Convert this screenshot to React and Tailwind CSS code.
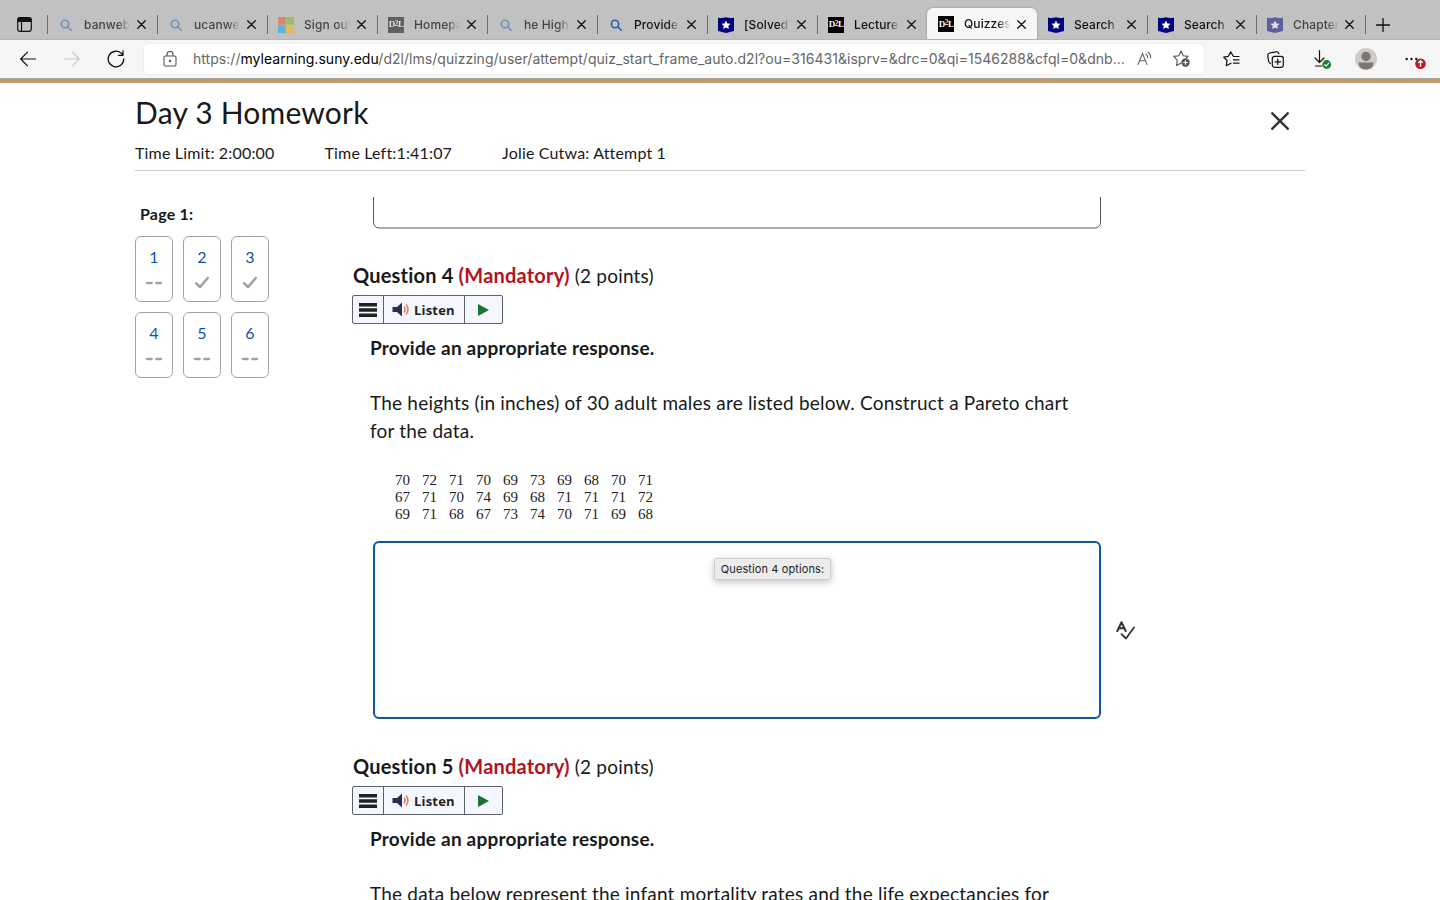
function SearchIcon() {
  return (
    <svg className="h-4 w-4" viewBox="0 0 16 16" fill="none" stroke="#1f5fb8" strokeWidth="1.6">
      <circle cx="7" cy="7" r="3.7" />
      <path strokeLinecap="round" d="M9.8 9.8l3.4 3.4" />
    </svg>
  );
}

function MicrosoftIcon() {
  return (
    <svg className="h-4 w-4" viewBox="0 0 16 16">
      <path fill="#f25022" d="M0 0h7.7v7.7H0z" />
      <path fill="#7fba00" d="M8.3 0H16v7.7H8.3z" />
      <path fill="#00a4ef" d="M0 8.3h7.7V16H0z" />
      <path fill="#ffb900" d="M8.3 8.3H16V16H8.3z" />
    </svg>
  );
}

function D2LIcon() {
  return (
    <span className="flex h-4 w-4 items-center justify-center bg-black font-['Liberation_Serif',serif] text-[9px] font-bold leading-none tracking-[-0.6px] text-white">
      D<span className="pb-[2px] text-[8px] text-[#f0d8c8]">2</span>L
    </span>
  );
}

function BadgeIcon() {
  return (
    <svg className="h-4 w-4" viewBox="0 0 16 16">
      <path fill="#00007f" d="M0 0.5Q4 1.8 8 0.3Q12 1.8 16 0.5V14L8 16L0 14Z" />
      <path fill="#fff" d="M8 3.4l1.4 3 3.2.3-2.4 2.2.7 3.2L8 10.5l-2.9 1.6.7-3.2-2.4-2.2 3.2-.3z" />
    </svg>
  );
}

function CloseIcon() {
  return (
    <svg className="h-[9px] w-[9px] shrink-0" viewBox="0 0 9 9" fill="none" stroke="#111" strokeWidth="1.3">
      <path strokeLinecap="round" d="M0.7 0.7l7.6 7.6M8.3 0.7L0.7 8.3" />
    </svg>
  );
}

const tabs = [
  { label: 'banweb', icon: SearchIcon, dim: true },
  { label: 'ucanwe', icon: SearchIcon, dim: true },
  { label: 'Sign out', icon: MicrosoftIcon, dim: true },
  { label: 'Homepa', icon: D2LIcon, dim: true },
  { label: 'he High', icon: SearchIcon, dim: true },
  { label: 'Provide', icon: SearchIcon },
  { label: '[Solved]', icon: BadgeIcon },
  { label: 'Lecture', icon: D2LIcon },
  { label: 'Quizzes', icon: D2LIcon, active: true },
  { label: 'Search', icon: BadgeIcon },
  { label: 'Search', icon: BadgeIcon, narrow: true },
  { label: 'Chapter', icon: BadgeIcon, dim: true, narrow: true },
];

function Tab({ label, icon: Icon, dim, active, narrow, separator }) {
  return (
    <div
      className={`flex shrink-0 items-center pl-[10px] ${narrow ? 'w-[109px]' : 'w-[110px]'} ${
        active ? 'mt-2 h-8 rounded-t-md bg-[#f6f6f6] shadow-[0_0_2px_rgba(0,0,0,0.35)]' : 'mt-[15px] h-[19px]'
      } ${separator ? 'border-l border-[#6e6e6e]' : 'border-l border-transparent'}`}
    >
      <span className={dim ? 'shrink-0 opacity-50' : 'shrink-0'}>
        <Icon />
      </span>
      <span
        className={`ml-[10px] w-[47px] shrink-0 whitespace-nowrap text-[12px] font-medium leading-[18px] tracking-[0.1px] [mask-image:linear-gradient(to_right,#000_72%,transparent_98%)] ${
          dim ? 'text-[#444]' : 'text-[#111]'
        }`}
      >
        {label}
      </span>
      <span className={narrow ? 'ml-[5px]' : 'ml-[6px]'}>
        <CloseIcon />
      </span>
    </div>
  );
}

function TabBar() {
  return (
    <div className="flex h-10 overflow-hidden border-b border-[#b4b4b4] bg-[#c1c1c1]">
      <div className="w-[47px] shrink-0 pl-[17px] pt-[17px]">
        <svg className="h-[15px] w-[15px]" viewBox="0 0 15 15" fill="none" stroke="#111" strokeWidth="1.2">
          <rect x="0.7" y="0.7" width="13.6" height="13.6" rx="2.2" />
          <path fill="#111" d="M1 3q0-2 2-2h9q2 0 2 2v1.5H1z" />
          <path d="M4.5 4.5v10" />
        </svg>
      </div>
      {tabs.map((tab, i) => (
        <Tab key={i} {...tab} separator={i !== 8 && i !== 9} />
      ))}
      <div className="mt-[15px] flex h-[19px] items-center border-l border-[#6e6e6e] pl-[10px]">
        <svg className="h-[14px] w-[14px]" viewBox="0 0 14 14" stroke="#111" strokeWidth="1.3">
          <path strokeLinecap="round" d="M7 0.5v13M0.5 7h13" />
        </svg>
      </div>
    </div>
  );
}

function AddressBar() {
  return (
    <div className="flex h-[38px] items-center bg-[#f6f6f6]">
      <svg className="ml-5 h-4 w-4" viewBox="0 0 16 16" fill="none" stroke="#111" strokeWidth="1.2" strokeLinecap="round" strokeLinejoin="round">
        <path d="M16 8H0.7M7.5 1.2L0.7 8l6.8 6.8" />
      </svg>
      <svg className="ml-7 h-4 w-4" viewBox="0 0 16 16" fill="none" stroke="#c8c8c8" strokeWidth="1.2" strokeLinecap="round" strokeLinejoin="round">
        <path d="M0 8h15.3M8.5 1.2L15.3 8l-6.8 6.8" />
      </svg>
      <svg className="ml-[27px] h-[18px] w-[18px]" viewBox="0 0 18 18" fill="none" stroke="#111" strokeWidth="1.3" strokeLinecap="round" strokeLinejoin="round">
        <path d="M16.8 9A7.8 7.8 0 1 1 14.8 3.8L16 5.2M16 1v4.3h-4.5" />
      </svg>
      <div className="ml-[19px] flex h-[30px] w-[1060px] shrink-0 items-center rounded bg-white shadow-[0_0_2px_rgba(0,0,0,0.12)]">
        <svg className="ml-[19px] h-4 w-[14px]" viewBox="0 0 14 16" fill="none" stroke="#555" strokeWidth="1.1">
          <rect x="1" y="5" width="12" height="10" rx="1.5" />
          <path d="M4 5V3.5a3 3 0 0 1 6 0V5" />
          <circle cx="7" cy="10" r="0.7" fill="#333" />
        </svg>
        <span className="-mt-px ml-4 w-[934px] shrink-0 whitespace-nowrap text-[14px] tracking-[0.035px] text-[#666]">
          https://<span className="text-black">mylearning.suny.edu</span>
          /d2l/lms/quizzing/user/attempt/quiz_start_frame_auto.d2l?ou=316431&amp;isprv=&amp;drc=0&amp;qi=1546288&amp;cfql=0&amp;dnb...
        </span>
        <svg className="ml-[10px] h-4 w-4 shrink-0" viewBox="0 0 16 16" fill="none" stroke="#666" strokeWidth="1.1" strokeLinecap="round">
          <path d="M1 13.5L5.5 2.5L10 13.5M2.6 9.8h5.8M9 3q1.7 1.200 1.700 3.500M11.300 1.200q2.500 2 2.300 5.800" />
        </svg>
        <svg className="ml-5 h-[18px] w-[18px] shrink-0" viewBox="0 0 18 18" fill="none" stroke="#555" strokeWidth="1.1" strokeLinejoin="round">
          <path d="M13 8.3L15 6.4L10.2 5.7L8 1L5.8 5.7L0.7 6.4L4.3 10.3L3.5 15.5L8 13" />
          <circle cx="12.5" cy="12.5" r="4.2" fill="#555" stroke="none" />
          <path stroke="#fff" d="M12.5 10.3v4.4M10.3 12.5h4.4" />
        </svg>
      </div>
      <svg className="ml-[19px] h-4 w-[17px] shrink-0" viewBox="0 0 17 16" fill="none" stroke="#111" strokeWidth="1.2" strokeLinecap="round" strokeLinejoin="round">
        <path d="M16 5.5h-5.5L7.7 0.9L5.3 5.3L0.7 6.2L4 9.5L3.3 14.7L8 12.2M10.5 8.8H16M10.5 12.2H16" />
      </svg>
      <svg className="ml-[27px] h-[17px] w-[17px] shrink-0" viewBox="0 0 17 17" fill="none" stroke="#111" strokeWidth="1.2" strokeLinecap="round" strokeLinejoin="round">
        <rect x="5.3" y="5.3" width="11" height="11" rx="2.2" />
        <path d="M10.8 8v5.6M8 10.8h5.6M3.5 12.5Q2 12 1.6 10.2L0.8 4.8Q0.6 2.5 2.9 2L9 0.8q2.2-.3 3 2" />
      </svg>
      <svg className="ml-[30px] h-[20px] w-[19px] shrink-0" viewBox="0 0 19 20" fill="none" stroke="#111" strokeWidth="1.2" strokeLinecap="round" strokeLinejoin="round">
        <path d="M5.5 1.5v12M1 9l4.5 4.5L10 9M1.5 17h6" />
        <circle cx="12.7" cy="15.5" r="4.4" fill="#1c7d33" stroke="none" />
        <path stroke="#fff" d="M10.7 15.7l1.400 1.400 2.700-2.900" />
      </svg>
      <svg className="ml-[22px] h-[22px] w-[22px] shrink-0" viewBox="0 0 22 22">
        <circle cx="11" cy="11" r="11" fill="#d0cbc7" />
        <circle cx="11" cy="8.5" r="4.7" fill="#797674" />
        <path fill="#797674" d="M3.5 14.5h15q-.5 7-7.5 7t-7.5-7z" />
      </svg>
      <svg className="ml-[28px] h-[20px] w-[21px] shrink-0" viewBox="0 0 21 20">
        <circle cx="1.7" cy="10" r="1.2" fill="#111" />
        <circle cx="6.5" cy="10" r="1.2" fill="#111" />
        <circle cx="11.3" cy="10" r="1.2" fill="#111" />
        <circle cx="15.5" cy="14.7" r="5.3" fill="#c4161c" />
        <path fill="none" stroke="#fff" strokeWidth="1.3" d="M15.5 17.7v-6M13.3 13.9l2.2-2.2 2.2 2.2" />
      </svg>
    </div>
  );
}

function QuizHeader() {
  return (
    <header className="h-[88px] border-b border-[#cdcdcd]">
      <div className="flex justify-between">
        <h1 className="mt-[7px] h-[46px] text-[30px] leading-[44px]">Day 3 Homework</h1>
        <svg className="mr-4 mt-[29px] h-[18px] w-[18px]" viewBox="0 0 18 18" fill="none" stroke="#333638" strokeWidth="2.5" strokeLinecap="round">
          <path d="M1.3 1.3l15.4 15.4M16.7 1.3L1.3 16.7" />
        </svg>
      </div>
      <div className="flex gap-[50px] pt-[5px] text-base leading-6 tracking-[0.17px]">
        <span>Time Limit: 2:00:00</span>
        <span>Time Left:1:41:07</span>
        <span>Jolie Cutwa: Attempt 1</span>
      </div>
    </header>
  );
}

const questions = [
  { number: 1 },
  { number: 2, saved: true },
  { number: 3, saved: true },
  { number: 4 },
  { number: 5 },
  { number: 6 },
];

function QuestionNav() {
  return (
    <nav className="w-[218px] shrink-0 pt-[31px]">
      <h2 className="pl-[5px] text-base font-bold leading-6">Page 1:</h2>
      <div className="mt-[10px] grid w-[134px] grid-cols-3 gap-[10px]">
        {questions.map(({ number, saved }) => (
          <div key={number} className="flex h-[66px] flex-col items-center rounded-md border border-[#9ea3a8] pt-2">
            <span className="text-base leading-6 text-[#0b55a8]">{number}</span>
            <svg className="mt-1 h-[18px] w-[18px]" viewBox="0 0 18 18" fill="none" stroke="#9ea3a8" strokeWidth="2.6" strokeLinecap="round" strokeLinejoin="round">
              {saved ? <path d="M3.3 10.3l3.7 3.7 7.8-9" /> : <path d="M2.2 10h4.3M11.500 10h4.300" />}
            </svg>
          </div>
        ))}
      </div>
    </nav>
  );
}

function ListenBar() {
  return (
    <div className="-ml-px flex h-[29px] w-[151px] rounded-[2px] border border-[#5c6068] bg-[#f4f7ff]">
      <div className="flex w-[31px] items-center justify-center border-r border-[#5c6068]">
        <svg className="h-[14px] w-[18px]" viewBox="0 0 18 14" fill="#222">
          <path d="M0 0h18v3.5H0zM0 5.2h18v3.5H0zM0 10.4h18v3.5H0z" />
        </svg>
      </div>
      <div className="flex w-[81px] items-center border-r border-[#5c6068] pl-[8px]">
        <svg className="h-[15px] w-[18px]" viewBox="0 0 18 15">
          <path fill="#292d4e" d="M0.5 5H5l5-4.500v14L5 10H0.5z" />
          <path fill="none" stroke="#e26a47" strokeWidth="1.3" d="M12 4.5q2.2 3 0 6M14 2.3q4 5.2 0 10.4" />
        </svg>
        <span className="ml-1 font-['Open_Sans',sans-serif] text-[13px] font-bold leading-5 text-[#222]">Listen</span>
      </div>
      <div className="flex flex-1 items-center justify-center">
        <svg className="h-3 w-[11px]" viewBox="0 0 11 12" fill="#1b7431">
          <path d="M0 0l11 6-11 6z" />
        </svg>
      </div>
    </div>
  );
}

function QuestionHeading({ number }) {
  return (
    <>
      <h2 className="h-7 text-[19px] leading-7">
        <span className="text-[20px] font-bold">
          Question {number} <span className="text-[#b5121f]">(Mandatory)</span>
        </span>{' '}
        (2 points)
      </h2>
      <div className="mt-[6px]">
        <ListenBar />
      </div>
    </>
  );
}

const heights = [
  [70, 72, 71, 70, 69, 73, 69, 68, 70, 71],
  [67, 71, 70, 74, 69, 68, 71, 71, 71, 72],
  [69, 71, 68, 67, 73, 74, 70, 71, 69, 68],
];

function HeightTable() {
  return (
    <div className="ml-[25px] mt-[27px] h-[51px] font-['Liberation_Serif',serif] text-[15px] leading-[17px] tracking-normal text-[#222]">
      {heights.map((row, i) => (
        <div key={i} className="flex">
          {row.map((value, j) => (
            <span key={j} className="w-[27px]">
              {value}
            </span>
          ))}
        </div>
      ))}
    </div>
  );
}

function AnswerBox() {
  return (
    <div className="ml-5 mt-[18px] flex items-center">
      <div className="relative h-[178px] w-[728px] rounded-md border-2 border-[#0b55a8] bg-white">
        <div className="absolute left-[339px] top-[15px] flex h-[22px] w-[117px] items-center justify-center whitespace-nowrap rounded-[2px] border border-[#cfcfcf] bg-[#ececec] font-['Inter',sans-serif] text-[11px] tracking-[0.1px] text-[#222] shadow-[0_2px_7px_rgba(0,0,0,0.25)]">
          Question 4 options:
        </div>
      </div>
      <svg className="ml-[15px] h-[19px] w-[19px]" viewBox="0 0 19 19" fill="none" stroke="#333638" strokeWidth="2" strokeLinecap="round" strokeLinejoin="round">
        <path d="M1.3 10L5.5 1.2L9.7 10M3 7.3h5" />
        <path strokeWidth="1.8" d="M5.5 13.2l4.5 4.3 8-11" />
      </svg>
    </div>
  );
}

function Quiz() {
  return (
    <main className="min-w-0 flex-1">
      <div className="mt-[26px] h-[32px] overflow-hidden">
        <div className="ml-5 h-[56px] w-[728px] -translate-y-[24.5px] rounded-md border border-[#55585c]" />
      </div>
      <section className="mt-[32px]">
        <QuestionHeading number={4} />
        <div className="ml-[17px] text-[19px] leading-7">
          <p className="mt-[10px] font-bold">Provide an appropriate response.</p>
          <p className="mt-[27px] w-[720px]">
            The heights (in inches) of 30 adult males are listed below. Construct a Pareto chart
            <br />
            for the data.
          </p>
          <HeightTable />
        </div>
        <AnswerBox />
      </section>
      <section className="mt-[33px]">
        <QuestionHeading number={5} />
        <div className="ml-[17px] text-[19px] leading-7">
          <p className="mt-[10px] font-bold">Provide an appropriate response.</p>
          <p className="mt-[27px] w-[720px] whitespace-nowrap">
            The data below represent the infant mortality rates and the life expectancies for
          </p>
        </div>
      </section>
    </main>
  );
}

export default function App() {
  return (
    <div className="flex h-screen flex-col overflow-hidden bg-white">
      <div className="shrink-0 font-['Inter',sans-serif]">
        <TabBar />
        <AddressBar />
      </div>
      <div className="h-[5px] shrink-0 border-t border-[#aaa59d] bg-[#bf9a6b]" />
      <div className="ml-[135px] w-[1170px] font-['Lato',sans-serif] tracking-[0.2px] text-[#18191a]">
        <QuizHeader />
        <div className="flex">
          <QuestionNav />
          <Quiz />
        </div>
      </div>
    </div>
  );
}
